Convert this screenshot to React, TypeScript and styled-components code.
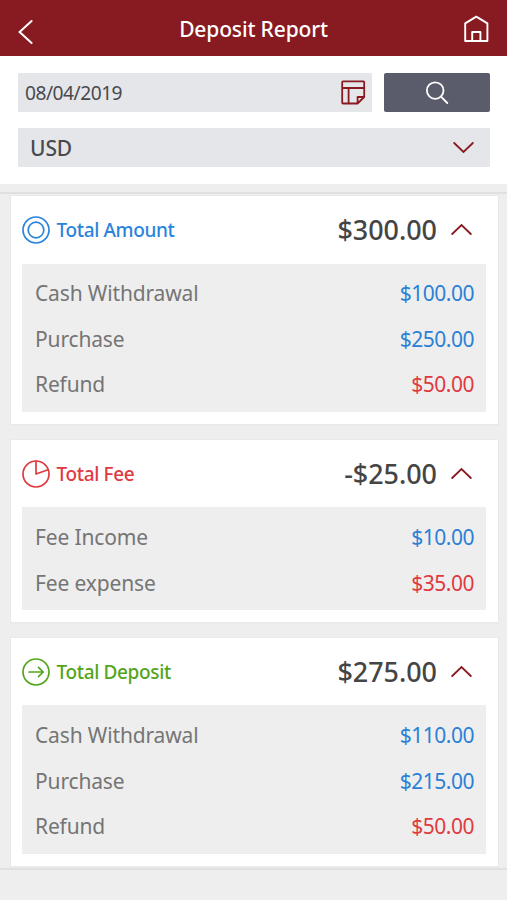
import React, { useState } from "react";
import styled, { createGlobalStyle } from "styled-components";

const GlobalStyle = createGlobalStyle`
  * { box-sizing: border-box; }
  body { margin: 0; background: #eeeeee; font-family: "Noto Sans", "Open Sans", sans-serif; }
  button { font: inherit; color: inherit; border: 0; padding: 0; background: none; cursor: pointer; }
  svg { display: block; flex: none; }
`;

const maroon = "#8a1a22";

const Screen = styled.div`
  min-height: 900px;
  display: flex;
  flex-direction: column;
  background: #eeeeee;
`;

const Header = styled.header`
  height: 56px;
  padding: 2px 18px 0 16px;
  display: grid;
  grid-template-columns: 28px 1fr 28px;
  align-items: center;
  background: #881a21;
  color: #fff;
`;

const Title = styled.h1`
  margin: 0;
  padding-left: 2px;
  font-size: 21px;
  letter-spacing: -0.15px;
  line-height: 30px;
  font-weight: 500;
  text-align: center;
  white-space: nowrap;
`;

const IconButton = styled.button`
  display: flex;
`;

const BackButton = styled(IconButton)`
  padding-top: 6px;
`;

const HomeButton = styled(IconButton)`
  justify-content: flex-end;
`;

const Filters = styled.section`
  height: 128px;
  padding: 17px 17px 0 18px;
  display: flex;
  flex-direction: column;
  gap: 16px;
  background: #fff;
`;

const FilterRow = styled.div`
  display: flex;
  gap: 12px;
`;

const Field = styled.button`
  flex: 1;
  height: 39px;
  display: flex;
  align-items: center;
  justify-content: space-between;
  background: #e4e6ea;
  border-radius: 1px;
  color: #4a4a4e;
`;

const DateField = styled(Field)`
  padding: 0 6px 0 7px;
  font-size: 19.2px;
  letter-spacing: -0.5px;
`;

const CurrencyField = styled(Field)`
  padding: 0 16px 0 12px;
  font-size: 21px;
  letter-spacing: -0.1px;
  font-weight: 500;
`;

const SearchButton = styled.button`
  width: 106px;
  height: 39px;
  display: flex;
  align-items: center;
  justify-content: center;
  background: #5a5c6c;
  border-radius: 2px;
`;

const Report = styled.main`
  margin-top: 8px;
  padding: 2px 8px 1px 10px;
  border-top: 2px solid #e0e0e0;
  border-bottom: 2px solid #e0e0e0;
  display: flex;
  flex-direction: column;
  gap: 15px;
`;

const Card = styled.section`
  padding: 0 12px 12px 11px;
  background: #fff;
  border: 1px solid #e8e8e8;
  border-top-width: 0;
  box-shadow: 0 -1px 0 #e9e9e9, 0 1px 0 #ebebeb;
`;

const CardHead = styled.button`
  width: 100%;
  height: 67.5px;
  padding-right: 14px;
  display: flex;
  align-items: center;
`;

const CardTitle = styled.span<{ $tone: string }>`
  margin-left: 6.5px;
  color: ${(p) => p.$tone};
  font-size: 19px;
  letter-spacing: -0.36px;
  font-weight: 500;
  white-space: nowrap;
`;

const Total = styled.span`
  margin-left: auto;
  margin-right: 14px;
  color: #454545;
  font-size: 26.9px;
  font-weight: 500;
`;

const Details = styled.dl`
  margin: 0;
  padding: 6.5px 12px 4.5px 13px;
  background: #eeeeee;
`;

const DetailRow = styled.div`
  height: 45.8px;
  display: flex;
  align-items: center;
  justify-content: space-between;
  font-size: 21px;
`;

const Label = styled.dt`
  color: #757575;
  letter-spacing: -0.15px;
`;

const Amount = styled.dd<{ $negative?: boolean }>`
  margin: 0;
  letter-spacing: -0.5px;
  color: ${(p) => (p.$negative ? "#e03a40" : "#2b80d6")};
`;

const Chevron = ({ up }: { up?: boolean }) => (
  <svg width="21" height="13" viewBox="0 0 21 13" fill="none" stroke={maroon} strokeWidth="1.8" strokeLinecap="round">
    <path d={up ? "M1.2 11 L10.5 2 L19.8 11" : "M1.2 2 L10.5 11 L19.8 2"} />
  </svg>
);

const BackIcon = () => (
  <svg width="20" height="26" viewBox="0 0 20 26" fill="none" stroke="#fff" strokeWidth="2" strokeLinecap="round">
    <path d="M15.6 2 L3.6 13 L15.6 24" />
  </svg>
);

const HomeIcon = () => (
  <svg width="26" height="28" viewBox="0 0 26 28" fill="none" stroke="#fff" strokeWidth="1.9" strokeLinejoin="round">
    <path d="M2.2 8.4 L13.3 1.6 L24.4 8.4 V26 H2.2 Z M9.2 26 V17 H17.4 V26" />
  </svg>
);

const CalendarIcon = () => (
  <svg width="25" height="25" viewBox="0 0 25 25" fill="none" stroke={maroon} strokeWidth="1.8" strokeLinejoin="round">
    <path d="M2 1.4 H22.4 Q23.2 1.4 23.2 2.2 V17 L16.6 23.5 H2 Q1.2 23.5 1.2 22.7 V2.2 Q1.2 1.4 2 1.4 Z M1.2 8 H23.2 M7.6 8 V23.5 M16.6 23.5 V17 H23.2" />
  </svg>
);

const SearchIcon = () => (
  <svg width="24" height="24" viewBox="0 0 24 24" fill="none" stroke="#fff" strokeWidth="1.8" strokeLinecap="round">
    <circle cx="10.2" cy="9.6" r="8.3" />
    <path d="M16 15.6 L22.3 22" />
  </svg>
);

type Kind = "amount" | "fee" | "deposit";

const KindIcon = ({ kind, color }: { kind: Kind; color: string }) => (
  <svg width="28" height="28" viewBox="0 0 28 28" fill="none" stroke={color} strokeWidth="1.7" strokeLinecap="round" strokeLinejoin="round">
    <circle cx="14" cy="14" r="13" />
    {kind === "amount" && <circle cx="14" cy="14" r="7.8" />}
    {kind === "fee" && <path d="M14 1 V14 L26 9.8" />}
    {kind === "deposit" && <path d="M7 14 H21.2 M16.5 9.3 L21.2 14 L16.5 18.7" />}
  </svg>
);

interface Group {
  kind: Kind;
  title: string;
  total: string;
  color: string;
  rows: { label: string; value: string; negative?: boolean }[];
}

const groups: Group[] = [
  {
    kind: "amount",
    title: "Total Amount",
    total: "$300.00",
    color: "#2b84dc",
    rows: [
      { label: "Cash Withdrawal", value: "$100.00" },
      { label: "Purchase", value: "$250.00" },
      { label: "Refund", value: "$50.00", negative: true },
    ],
  },
  {
    kind: "fee",
    title: "Total Fee",
    total: "-$25.00",
    color: "#df3a3f",
    rows: [
      { label: "Fee Income", value: "$10.00" },
      { label: "Fee expense", value: "$35.00", negative: true },
    ],
  },
  {
    kind: "deposit",
    title: "Total Deposit",
    total: "$275.00",
    color: "#54a51c",
    rows: [
      { label: "Cash Withdrawal", value: "$110.00" },
      { label: "Purchase", value: "$215.00" },
      { label: "Refund", value: "$50.00", negative: true },
    ],
  },
];

const ReportCard = ({ group }: { group: Group }) => {
  const [open, setOpen] = useState(true);
  return (
    <Card>
      <CardHead aria-expanded={open} onClick={() => setOpen(!open)}>
        <KindIcon kind={group.kind} color={group.color} />
        <CardTitle $tone={group.color}>{group.title}</CardTitle>
        <Total>{group.total}</Total>
        <Chevron up={open} />
      </CardHead>
      {open && (
        <Details>
          {group.rows.map((row) => (
            <DetailRow key={row.label}>
              <Label>{row.label}</Label>
              <Amount $negative={row.negative}>{row.value}</Amount>
            </DetailRow>
          ))}
        </Details>
      )}
    </Card>
  );
};

export default function App() {
  return (
    <>
      <GlobalStyle />
      <Screen>
        <Header>
          <BackButton aria-label="Back"><BackIcon /></BackButton>
          <Title>Deposit Report</Title>
          <HomeButton aria-label="Home"><HomeIcon /></HomeButton>
        </Header>
        <Filters>
          <FilterRow>
            <DateField>08/04/2019<CalendarIcon /></DateField>
            <SearchButton aria-label="Search"><SearchIcon /></SearchButton>
          </FilterRow>
          <FilterRow>
            <CurrencyField>USD<Chevron /></CurrencyField>
          </FilterRow>
        </Filters>
        <Report>
          {groups.map((group) => (
            <ReportCard key={group.kind} group={group} />
          ))}
        </Report>
      </Screen>
    </>
  );
}
